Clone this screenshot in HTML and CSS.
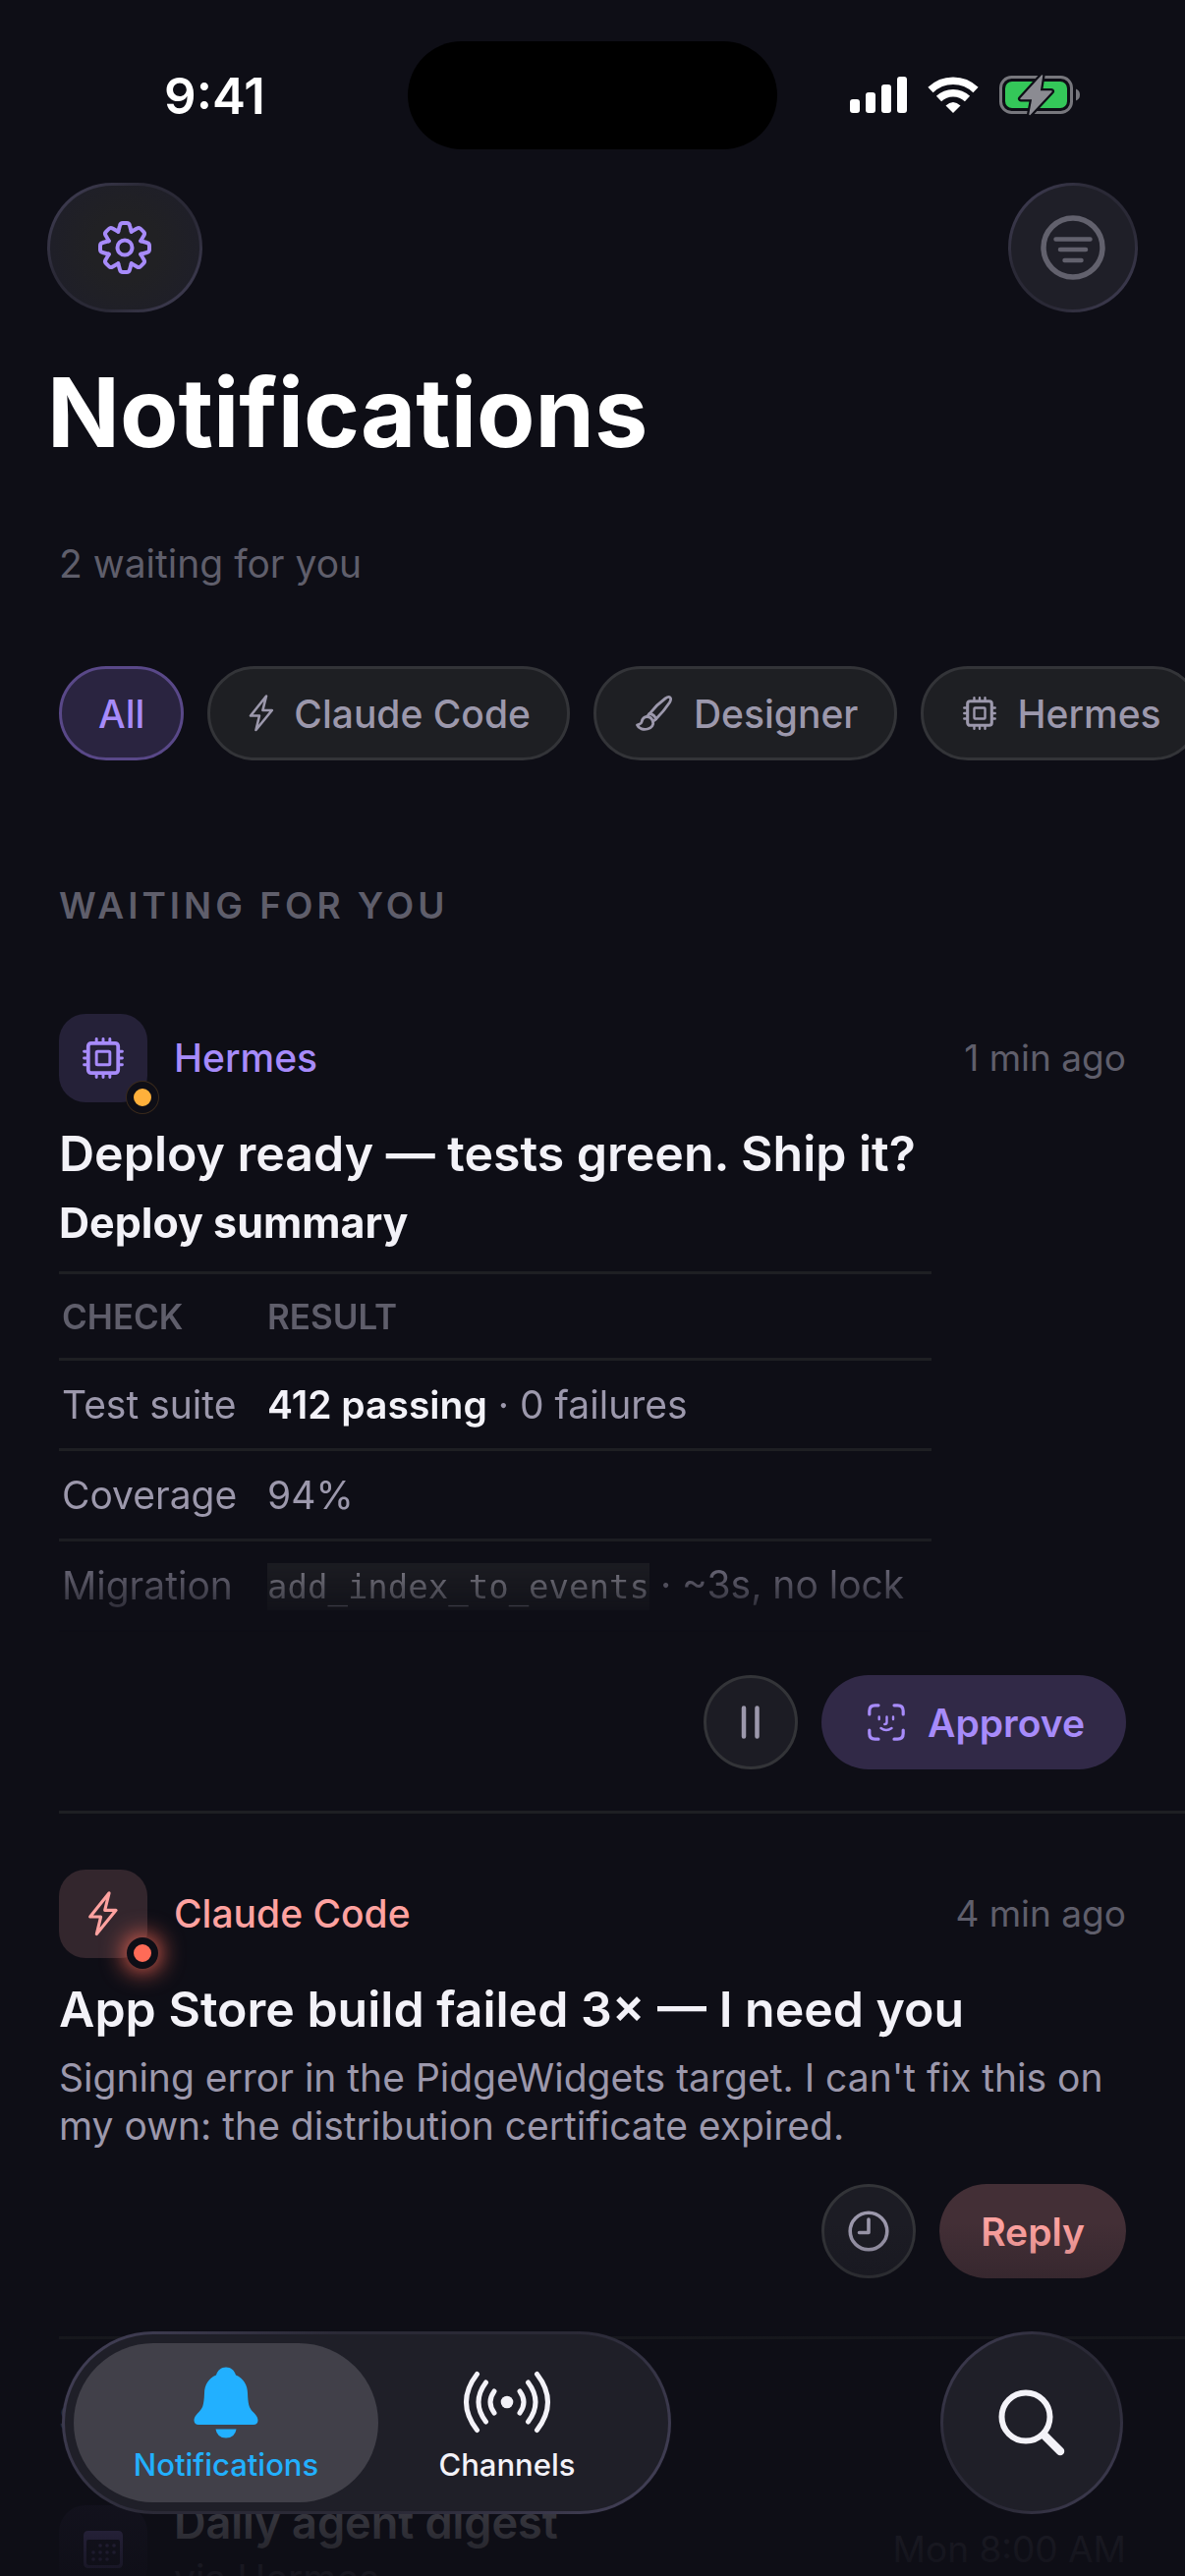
FILE: index.html
```html
<!DOCTYPE html>
<html lang="en">
<head>
    <meta charset="UTF-8">
    <meta name="viewport" content="width=device-width, initial-scale=1.0">
    <title>Notifications</title>
    <link rel="stylesheet" href="styles.css">
</head>
<body>
    <!-- Shared icons -->
    <svg class="sprite" aria-hidden="true">
        <symbol id="icon-bolt" viewBox="0 0 25 38">
            <path d="M17.5 1.5 L1.5 21.5 H10.5 L7 36 L23.3 16 H13.9 Z" fill="none" stroke="currentColor" stroke-width="2.6" stroke-linejoin="round"/>
        </symbol>
        <symbol id="icon-cpu" viewBox="0 0 40 40">
            <g fill="none" stroke="currentColor" stroke-linecap="round">
                <rect x="5.5" y="5.5" width="29" height="29" rx="3" stroke-width="3.6"/>
                <rect x="13.5" y="13.5" width="13" height="13" rx="1" stroke-width="2.8"/>
                <path stroke-width="2.8" d="M13.5 1.5V5 M20 1.5V5 M26.5 1.5V5 M13.5 35V38.5 M20 35V38.5 M26.5 35V38.5 M1.5 13.5H5 M1.5 20H5 M1.5 26.5H5 M35 13.5H38.5 M35 20H38.5 M35 26.5H38.5"/>
            </g>
        </symbol>
        <symbol id="gear-tooth" viewBox="-27 -27 54 54">
            <path d="M-6.7 -16.2 L-5 -22.5 Q-4.4 -25 -2 -25 H2 Q4.4 -25 5 -22.5 L6.7 -16.2" fill="none" stroke="currentColor" stroke-width="4" stroke-linecap="round" stroke-linejoin="round"/>
        </symbol>
    </svg>

    <div class="screen">
        <!-- Status bar -->
        <div class="status-bar">
            <span class="status-time">9:41</span>
            <span class="island"></span>
            <span class="status-icons">
                <svg width="58" height="38" viewBox="0 0 58 38" fill="#fff">
                    <rect x="0" y="23" width="10" height="14" rx="3"/>
                    <rect x="16" y="16" width="10" height="21" rx="3"/>
                    <rect x="32" y="8" width="10" height="29" rx="3"/>
                    <rect x="48" y="0" width="10" height="37" rx="3"/>
                </svg>
                <svg width="52" height="38" viewBox="0 0 52 38" fill="none" stroke="#fff" stroke-width="7.5">
                    <path d="M3 13.5 A33 33 0 0 1 49 13.5"/>
                    <path d="M11.5 22.5 A21 21 0 0 1 40.5 22.5"/>
                    <path d="M26 37 L18.5 29.5 Q26 22.5 33.5 29.5 Z" fill="#fff" stroke="none"/>
                </svg>
                <svg width="83" height="42" viewBox="0 0 83 42">
                    <rect x="1.5" y="2.5" width="72" height="36" rx="11" fill="none" stroke="#77777d" stroke-width="3"/>
                    <rect x="6" y="7" width="63" height="27" rx="7" fill="#34c759"/>
                    <path d="M78 14.5 Q82 16 82 20.5 Q82 25 78 26.5 Z" fill="#77777d"/>
                    <path d="M43.5 1 L22 24.5 H34 L31 40.5 L53 17 H41 Z" fill="#8b8b92" stroke="#0e0e16" stroke-width="6" stroke-linejoin="round"/>
                    <path d="M43.5 1 L22 24.5 H34 L31 40.5 L53 17 H41 Z" fill="#8b8b92" stroke="#8b8b92" stroke-width="1.5" stroke-linejoin="round"/>
                </svg>
            </span>
        </div>

        <!-- Toolbar -->
        <header class="toolbar">
            <button class="glass tool-btn tool-btn-wide" aria-label="Settings">
                <svg width="54" height="54" viewBox="-27 -27 54 54">
                    <use href="#gear-tooth" x="-27" y="-27" width="54" height="54"/>
                    <use href="#gear-tooth" x="-27" y="-27" width="54" height="54" transform="rotate(45)"/>
                    <use href="#gear-tooth" x="-27" y="-27" width="54" height="54" transform="rotate(90)"/>
                    <use href="#gear-tooth" x="-27" y="-27" width="54" height="54" transform="rotate(135)"/>
                    <use href="#gear-tooth" x="-27" y="-27" width="54" height="54" transform="rotate(180)"/>
                    <use href="#gear-tooth" x="-27" y="-27" width="54" height="54" transform="rotate(225)"/>
                    <use href="#gear-tooth" x="-27" y="-27" width="54" height="54" transform="rotate(270)"/>
                    <use href="#gear-tooth" x="-27" y="-27" width="54" height="54" transform="rotate(315)"/>
                    <circle r="7.5" fill="none" stroke="currentColor" stroke-width="4"/>
                </svg>
            </button>
            <button class="glass tool-btn" aria-label="Filter">
                <svg width="66" height="66" viewBox="0 0 66 66" fill="none" stroke="currentColor" stroke-linecap="round">
                    <circle cx="33" cy="33" r="30" stroke-width="5.5"/>
                    <path d="M15.5 24.5H50.5 M20 35H46 M24.5 46H41.5" stroke-width="4.5"/>
                </svg>
            </button>
        </header>

        <main>
            <h1 class="page-title">Notifications</h1>
            <p class="page-subtitle">2 waiting for you</p>

            <!-- Channel filter -->
            <nav class="chips" aria-label="Channels filter">
                <button class="chip chip-active">All</button>
                <button class="chip">
                    <svg width="30" height="38"><use href="#icon-bolt"/></svg>
                    Claude Code
                </button>
                <button class="chip">
                    <svg width="44" height="38" viewBox="-3 -1 44 38" fill="none" stroke="currentColor" stroke-width="2.8" stroke-linejoin="round" stroke-linecap="round">
                        <path d="M14 18.5 Q21 9.5 30 3 Q33.5 0.5 35 2 Q36.5 3.5 34.5 7 Q29 15.5 20.5 24"/>
                        <path d="M14 18.5 Q19.5 19.5 20.5 24"/>
                        <path d="M14 18.5 L11.5 21.5 M20.5 24 L17.5 26.5"/>
                        <path d="M11.5 21.5 C7.5 21.5 6.5 24.5 6 27 C5.5 29.5 3 29 1.5 30 C3 34 8 35 12 34 C16.5 32.8 18.5 29.5 17.5 26.5 C16.5 23 14.5 21.5 11.5 21.5 Z"/>
                    </svg>
                    Designer
                </button>
                <button class="chip">
                    <svg width="40" height="34"><use href="#icon-cpu"/></svg>
                    Hermes
                </button>
            </nav>

            <!-- Waiting section -->
            <section>
                <h2 class="section-label">WAITING FOR YOU</h2>

                <article class="card">
                    <div class="card-head">
                        <span class="avatar avatar-violet">
                            <svg width="42" height="42"><use href="#icon-cpu"/></svg>
                            <span class="badge badge-amber"></span>
                        </span>
                        <span class="sender sender-violet">Hermes</span>
                        <time class="card-time">1 min ago</time>
                    </div>
                    <h3 class="card-title">Deploy ready — tests green. Ship it?</h3>
                    <div class="preview">
                        <h4 class="summary-title">Deploy summary</h4>
                        <table class="summary">
                            <thead>
                                <tr><th>CHECK</th><th>RESULT</th></tr>
                            </thead>
                            <tbody>
                                <tr><td>Test suite</td><td><strong>412 passing</strong> · 0 failures</td></tr>
                                <tr><td>Coverage</td><td>94%</td></tr>
                                <tr><td>Migration</td><td><code>add_index_to_events</code> · ~3s, no lock</td></tr>
                            </tbody>
                        </table>
                    </div>
                    <div class="actions">
                        <button class="round-btn" aria-label="Pause">
                            <svg width="20" height="36" viewBox="0 0 20 36" stroke="currentColor" stroke-width="4.5" stroke-linecap="round">
                                <path d="M3 3.5V32.5 M16.5 3.5V32.5"/>
                            </svg>
                        </button>
                        <button class="pill-btn pill-violet">
                            <svg width="48" height="38" viewBox="-5 0 48 38" fill="none" stroke="currentColor" stroke-width="3.2" stroke-linecap="round">
                                <path d="M1.8 11V7.5Q1.8 1.8 7.5 1.8H11 M27 1.8H30.5Q36.2 1.8 36.2 7.5V11 M36.2 27V30.5Q36.2 36.2 30.5 36.2H27 M11 36.2H7.5Q1.8 36.2 1.8 30.5V27"/>
                                <path stroke-width="2.4" d="M11.7 13.5V16 M26 13.5V16 M19.5 13.5V19Q19.5 21 17.3 21 M13.5 25Q19 29 24.5 25"/>
                            </svg>
                            Approve
                        </button>
                    </div>
                </article>

                <article class="card card-last">
                    <div class="card-head">
                        <span class="avatar avatar-coral">
                            <svg width="32" height="46"><use href="#icon-bolt"/></svg>
                            <span class="badge badge-red"></span>
                        </span>
                        <span class="sender sender-coral">Claude Code</span>
                        <time class="card-time">4 min ago</time>
                    </div>
                    <h3 class="card-title">App Store build failed 3× — I need you</h3>
                    <p class="card-text">Signing error in the PidgeWidgets target. I can't fix this on my own: the distribution certificate expired.</p>
                    <div class="actions">
                        <button class="round-btn" aria-label="Snooze">
                            <svg width="42" height="42" viewBox="0 0 42 42" fill="none" stroke="currentColor" stroke-width="3.6" stroke-linecap="round" stroke-linejoin="round">
                                <circle cx="21" cy="21" r="18.8"/>
                                <path d="M21 9V22.5H11.5"/>
                            </svg>
                        </button>
                        <button class="pill-btn pill-coral">Reply</button>
                    </div>
                </article>
            </section>

            <!-- Scheduled section, runs under the tab bar -->
            <section>
                <h2 class="section-label section-label-tight">SCHEDULED</h2>
                <div class="digest">
                    <span class="avatar avatar-violet">
                        <svg width="42" height="40" viewBox="0 0 42 40" fill="currentColor">
                            <path fill-rule="evenodd" d="M6 1H36Q41 1 41 6V34Q41 39 36 39H6Q1 39 1 34V6Q1 1 6 1Z M6 10Q4 10 4 12V33Q4 36 7 36H35Q38 36 38 33V12Q38 10 36 10Z"/>
                            <circle cx="18" cy="16" r="1.8"/><circle cx="25" cy="16" r="1.8"/><circle cx="32" cy="16" r="1.8"/>
                            <circle cx="11" cy="23" r="1.8"/><circle cx="18" cy="23" r="1.8"/><circle cx="25" cy="23" r="1.8"/><circle cx="32" cy="23" r="1.8"/>
                            <circle cx="11" cy="30" r="1.8"/><circle cx="18" cy="30" r="1.8"/><circle cx="25" cy="30" r="1.8"/>
                        </svg>
                    </span>
                    <div class="digest-text">
                        <h3 class="digest-title">Daily agent digest</h3>
                        <p class="digest-via">via Hermes</p>
                    </div>
                    <time class="card-time">Mon 8:00 AM</time>
                </div>
            </section>
        </main>

        <!-- Floating tab bar -->
        <footer class="bottom-bar">
            <nav class="glass tabs" aria-label="Main">
                <a class="tab tab-active" href="#notifications">
                    <svg width="66" height="74" viewBox="0 0 66 74" fill="currentColor">
                        <path d="M33 0.5C38 0.5 41.5 3.5 43 8.5C50.5 11.5 55 18.5 55 27C55.5 40 57 42.5 61 46.5C64.5 50 65.5 52 65.5 55Q65 59 61 59H5Q1 59 0.5 55C0.5 52 1.5 50 5 46.5C9 42.5 10.5 40 11 27C11 18.5 15.5 11.5 23 8.5C24.5 3.5 28 0.5 33 0.5Z"/>
                        <path d="M22.5 63.5H43.5Q42 72.5 33 72.5Q24 72.5 22.5 63.5Z"/>
                    </svg>
                    <span>Notifications</span>
                </a>
                <a class="tab" href="#channels">
                    <svg width="90" height="74" viewBox="0 0 90 74" fill="none" stroke="currentColor" stroke-width="5" stroke-linecap="round">
                        <circle cx="45" cy="36" r="6.3" fill="currentColor" stroke="none"/>
                        <path d="M32 25Q24 36 32 47 M58 25Q66 36 58 47"/>
                        <path d="M23.500 16Q8.500 36 23.500 56 M66.500 16Q81.500 36 66.500 56"/>
                        <path d="M14.500 7.500Q-7.500 36 14.500 64.500 M75.500 7.500Q97.500 36 75.500 64.500"/>
                    </svg>
                    <span>Channels</span>
                </a>
            </nav>
            <button class="glass search-btn" aria-label="Search">
                <svg width="70" height="70" viewBox="0 0 70 70" fill="none" stroke="currentColor" stroke-linecap="round">
                    <circle cx="29" cy="29" r="24.5" stroke-width="6"/>
                    <path d="M48 48L64 64" stroke-width="8.5"/>
                </svg>
            </button>
        </footer>
    </div>
</body>
</html>
```
FILE: styles.css
```css
/* Reset */
* {
    margin: 0;
    padding: 0;
    box-sizing: border-box;
}

:root {
    --bg: #0e0e16;
    --text: #f3f2f8;
    --muted: #9c98ac;
    --dim: #5f5e6b;
    --violet: #a78bfa;
    --coral: #ffa2a0;
    --line: #1e1f23;
    --edge: 60px;
}

body {
    background: var(--bg);
    color: var(--text);
    font-family: Inter, "Noto Sans", sans-serif;
}

button {
    font: inherit;
    color: inherit;
    border: none;
    cursor: pointer;
}

.sprite {
    position: absolute;
    width: 0;
    height: 0;
}

.screen {
    position: relative;
    height: 100vh;
    overflow: hidden;
}

/* The list fades out under the tab bar */
.screen::after {
    content: "";
    position: absolute;
    left: 0;
    right: 0;
    bottom: 0;
    height: 360px;
    background: linear-gradient(rgba(14, 14, 22, 0), rgba(14, 14, 22, 0.5) 35%, rgba(14, 14, 22, 0.82) 82%, rgba(14, 14, 22, 0.94));
    pointer-events: none;
}

/* Status bar */
.status-bar {
    display: grid;
    grid-template-columns: 1fr 376px 1fr;
    align-items: center;
    padding-top: 42px;
}

.status-time {
    padding: 2px 0 0 22px;
    text-align: center;
    font-size: 51px;
    line-height: 60px;
    font-weight: 600;
    color: #fff;
}

.island {
    height: 110px;
    border-radius: 55px;
    background: #000;
}

.status-icons {
    display: flex;
    align-items: center;
    justify-content: center;
    gap: 21px;
    padding-right: 32px;
}

/* Translucent controls */
.glass {
    border: 3px solid transparent;
    background:
        linear-gradient(#1f1f28, #1f1f28) padding-box,
        linear-gradient(135deg, #45425a, #2a2936 35%, #2a2936 65%, #45425a) border-box;
}

/* Toolbar */
.toolbar {
    display: flex;
    justify-content: space-between;
    padding: 34px 48px 0;
}

.tool-btn {
    display: flex;
    align-items: center;
    justify-content: center;
    width: 132px;
    height: 132px;
    border-radius: 66px;
    color: #62616d;
}

.tool-btn-wide {
    width: 158px;
    color: var(--violet);
    background:
        radial-gradient(circle, #212124 35%, #1f1f28 75%) padding-box,
        linear-gradient(135deg, #45425a, #2a2936 35%, #2a2936 65%, #45425a) border-box;
}

/* Heading */
.page-title {
    margin: 42px 48px 0;
    font-size: 97px;
    line-height: 120px;
    font-weight: 700;
    color: #fff;
}

.page-subtitle {
    margin: 70px var(--edge) 0;
    font-size: 39px;
    line-height: 48px;
    color: var(--dim);
}

/* Filter chips */
.chips {
    display: flex;
    gap: 24px;
    margin-top: 80px;
    padding-left: var(--edge);
    overflow: hidden;
}

.chip {
    display: flex;
    flex: none;
    align-items: center;
    gap: 18px;
    height: 96px;
    padding: 0 37px;
    border: 3px solid #333438;
    border-radius: 48px;
    background: #1e1f23;
    color: var(--muted);
    font-size: 39px;
    font-weight: 500;
}

.chip-active {
    border-color: #594888;
    background: #2a2440;
    color: var(--violet);
}

/* Sections */
.section-label {
    margin: 126px var(--edge) 31px;
    font-size: 37px;
    line-height: 44px;
    font-weight: 600;
    letter-spacing: 4px;
    color: var(--dim);
}

.section-label-tight {
    margin-top: 59px;
}

/* Cards */
.card {
    margin-left: var(--edge);
    padding: 57px var(--edge) 42px 0;
    border-bottom: 3px solid var(--line);
}

.card-last {
    padding-bottom: 59px;
}

.card-head {
    display: flex;
    align-items: center;
}

.avatar {
    position: relative;
    display: flex;
    flex: none;
    align-items: center;
    justify-content: center;
    width: 90px;
    height: 90px;
    margin-right: 27px;
    border-radius: 27px;
}

.avatar-violet {
    background: #252138;
    color: var(--violet);
}

.avatar-coral {
    background: #33262d;
    color: var(--coral);
}

/* Urgency dot on the avatar corner */
.badge {
    position: absolute;
    right: -11px;
    bottom: -11px;
    width: 32px;
    height: 32px;
    border: 7px solid var(--bg);
    border-radius: 50%;
}

.badge-amber {
    background: #ffb03b;
    box-shadow: 0 0 0 1px #3a2a1c;
}

.badge-red {
    background: #ff6b57;
    box-shadow: 0 0 24px 2px #ff6b57;
}

.sender {
    font-size: 39px;
    line-height: 48px;
    font-weight: 500;
}

.sender-violet {
    color: var(--violet);
}

.sender-coral {
    color: var(--coral);
}

.card-time {
    margin-left: auto;
    font-size: 37px;
    line-height: 48px;
    color: var(--dim);
}

.card-title {
    margin-top: 22px;
    font-size: 50px;
    line-height: 60px;
    font-weight: 600;
}

.card-text {
    margin-top: 15px;
    font-size: 39px;
    line-height: 49px;
    color: var(--muted);
}

/* Long previews are cut off with a fade */
.preview {
    height: 451px;
    margin-top: 15px;
    overflow: hidden;
    -webkit-mask-image: linear-gradient(#000 75%, transparent 98%);
    mask-image: linear-gradient(#000 75%, transparent 98%);
}

.summary-title {
    font-size: 43px;
    line-height: 50px;
    font-weight: 700;
}

.summary {
    width: 888px;
    max-width: 100%;
    margin-top: 25px;
    border-collapse: collapse;
    border-bottom: 3px solid var(--line);
}

.summary tr {
    height: 92px;
    border-top: 3px solid var(--line);
}

.summary thead tr {
    height: 88px;
}

.summary th,
.summary td {
    padding: 0 3px;
    text-align: left;
    font-size: 39px;
    line-height: 46px;
    font-weight: 400;
    color: var(--muted);
    white-space: nowrap;
}

.summary th {
    font-size: 35px;
    font-weight: 600;
    color: var(--dim);
}

.summary th:first-child {
    width: 209px;
}

.summary strong {
    font-weight: 600;
    color: var(--text);
}

.summary code {
    padding: 4px 0;
    background: #222327;
    font-family: "DejaVu Sans Mono", monospace;
    font-size: 34px;
    color: #b5b3bf;
}

/* Card buttons */
.actions {
    display: flex;
    justify-content: flex-end;
    gap: 24px;
    margin-top: 35px;
}

.round-btn {
    display: flex;
    align-items: center;
    justify-content: center;
    width: 96px;
    height: 96px;
    border: 3px solid #333438;
    border-radius: 50%;
    background: #1c1c24;
    color: var(--muted);
}

.pill-btn {
    display: flex;
    align-items: center;
    gap: 18px;
    height: 96px;
    padding: 0 42px;
    border-radius: 48px;
    font-size: 39px;
    font-weight: 600;
}

.pill-violet {
    background: #312947;
    color: var(--violet);
}

.pill-coral {
    background: #432f36;
    color: var(--coral);
}

/* Scheduled row */
.digest {
    display: flex;
    align-items: center;
    margin: 57px var(--edge) 0;
}

.digest-title {
    font-size: 45px;
    line-height: 54px;
    font-weight: 600;
}

.digest-via {
    margin-top: 6px;
    font-size: 39px;
    line-height: 48px;
    color: var(--muted);
}

/* Tab bar */
.bottom-bar {
    position: absolute;
    z-index: 2;
    left: 63px;
    right: 63px;
    bottom: 63px;
    display: flex;
    justify-content: space-between;
}

.tabs {
    display: flex;
    height: 186px;
    padding: 9px;
    border-radius: 93px;
}

.tab {
    display: flex;
    flex-direction: column;
    align-items: center;
    width: 310px;
    padding-top: 24px;
    border-radius: 81px;
    font-size: 31px;
    line-height: 36px;
    font-weight: 500;
    color: var(--text);
    text-decoration: none;
}

.tab span {
    margin-top: 8px;
}

.tab + .tab {
    margin-left: -24px;
}

.tab-active {
    background: #414049;
    color: #22b0ff;
}

.search-btn {
    display: flex;
    align-items: center;
    justify-content: center;
    width: 186px;
    height: 186px;
    border-radius: 50%;
    color: var(--text);
}
```
